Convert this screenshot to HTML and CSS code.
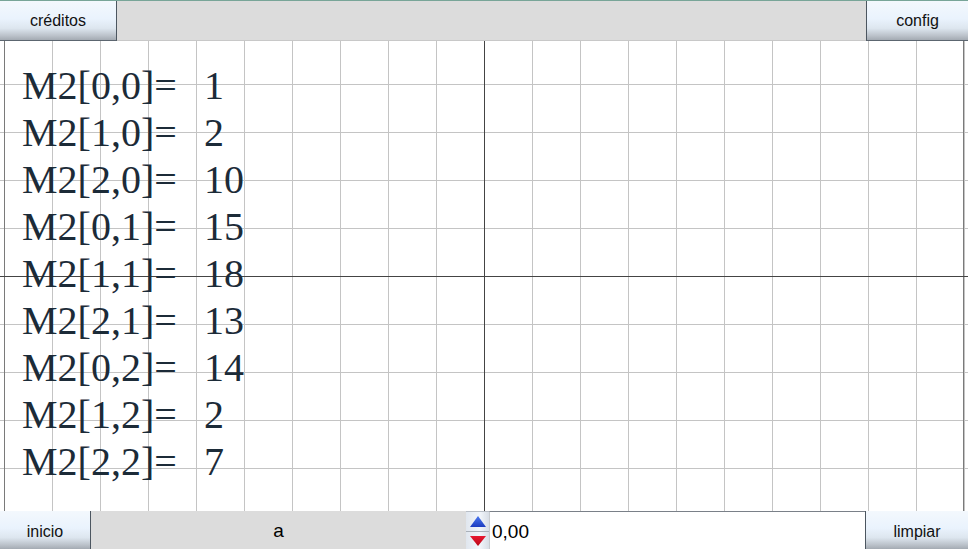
FILE: index.html
```html
<!DOCTYPE html>
<html lang="es">
<head>
<meta charset="utf-8">
<title>Matriz M2</title>
<link rel="stylesheet" href="styles.css">
</head>
<body>
<div class="app">
  <div class="topbar">
    <div class="btn btn-left">créditos</div>
    <div class="spacer"></div>
    <div class="btn btn-right">config</div>
  </div>
  <div class="canvas">
    <div class="rows">
      <div class="row"><span class="lbl">M2[0,0]=</span><span class="val">1</span></div>
      <div class="row"><span class="lbl">M2[1,0]=</span><span class="val">2</span></div>
      <div class="row"><span class="lbl">M2[2,0]=</span><span class="val">10</span></div>
      <div class="row"><span class="lbl">M2[0,1]=</span><span class="val">15</span></div>
      <div class="row"><span class="lbl">M2[1,1]=</span><span class="val">18</span></div>
      <div class="row"><span class="lbl">M2[2,1]=</span><span class="val">13</span></div>
      <div class="row"><span class="lbl">M2[0,2]=</span><span class="val">14</span></div>
      <div class="row"><span class="lbl">M2[1,2]=</span><span class="val">2</span></div>
      <div class="row"><span class="lbl">M2[2,2]=</span><span class="val">7</span></div>
    </div>
  </div>
  <div class="bottombar">
    <div class="btn btn-inicio">inicio</div>
    <div class="param">a</div>
    <div class="spinner">
      <svg class="arrow" width="16" height="12" viewBox="0 0 16 12"><defs><linearGradient id="gu" x1="0" y1="0" x2="0" y2="1"><stop offset="0" stop-color="#4a78f0"/><stop offset="1" stop-color="#1c3cc0"/></linearGradient></defs><polygon points="8,0 16,11 0,11" fill="url(#gu)"/></svg>
      <div class="spin-sep"></div>
      <svg class="arrow" width="16" height="12" viewBox="0 0 16 12"><defs><linearGradient id="gd" x1="0" y1="0" x2="0" y2="1"><stop offset="0" stop-color="#e81830"/><stop offset="1" stop-color="#b80818"/></linearGradient></defs><polygon points="0,1 16,1 8,11" fill="url(#gd)"/></svg>
    </div>
    <div class="input">0,00</div>
    <div class="btn btn-limpiar">limpiar</div>
  </div>
</div>
</body>
</html>
```
FILE: styles.css
```css
* { box-sizing: border-box; }
html, body { margin: 0; padding: 0; }
body {
  width: 968px;
  height: 549px;
  overflow: hidden;
  background: #ffffff;
  font-family: "Liberation Sans", Arial, sans-serif;
}
.app {
  display: flex;
  flex-direction: column;
  width: 968px;
  height: 549px;
}
.topbar {
  height: 41px;
  display: flex;
  background: #dcdcdc;
  border-top: 1px solid #78a598;
  border-bottom: 1px solid #c8c8c8;
}
.spacer { flex: 1; }
.btn {
  display: flex;
  align-items: center;
  justify-content: center;
  font-size: 16px;
  color: #111;
  background: linear-gradient(to bottom, #f3f8fd 0%, #eaf3fd 45%, #dde6ef 70%, #b9c0c8 90%, #a3aab2 100%);
}
.btn-left {
  width: 117px;
  margin-bottom: -1px;
  border-right: 1px solid #4c5660;
  border-bottom: 1px solid #5c6670;
}
.btn-right {
  width: 102px;
  margin-bottom: -1px;
  border-left: 1px solid #4c5660;
  border-bottom: 1px solid #5c6670;
}
.canvas {
  height: 470px;
  background-color: #ffffff;
  background-image:
    linear-gradient(#444, #444),
    linear-gradient(#444, #444),
    linear-gradient(#7a7a7a, #7a7a7a),
    linear-gradient(#7a7a7a, #7a7a7a),
    linear-gradient(to right, #c4c4c4 1px, transparent 1px),
    linear-gradient(to bottom, #c4c4c4 1px, transparent 1px);
  background-size:
    1px 100%,
    100% 1px,
    1px 100%,
    1px 100%,
    48px 48px,
    48px 48px;
  background-position:
    484px 0,
    0 235px,
    4px 0,
    963px 0,
    4px 0,
    0 43px;
  background-repeat:
    no-repeat,
    no-repeat,
    no-repeat,
    no-repeat,
    repeat,
    repeat;
}
.rows {
  padding: 21px 0 0 22px;
  font-family: "Liberation Serif", "Times New Roman", serif;
  font-size: 40px;
  line-height: 47px;
  color: #1c2b38;
}
.row { display: flex; white-space: nowrap; }
.lbl { width: 182px; }
.bottombar {
  height: 38px;
  display: flex;
  background: #dcdcdc;
}
.btn-inicio {
  width: 91px;
  border-right: 1px solid #4c5660;
  padding-top: 3px;
}
.param {
  flex: 0 0 375px;
  display: flex;
  align-items: center;
  justify-content: center;
  font-size: 19px;
  color: #000;
  padding-top: 2px;
}
.spinner {
  width: 23px;
  display: flex;
  flex-direction: column;
  align-items: center;
  padding-top: 4px;
  background: linear-gradient(to right, #e0e6ee, #f2f6fb 60%, #d8dee6);
  border-top: 1px solid #b8bec6;
}
.arrow { display: block; }
.spin-sep {
  width: 100%;
  height: 1px;
  margin: 3px 0 3px;
  background: #aab0b8;
}
.input {
  width: 376px;
  background: #ffffff;
  border-top: 1px solid #7a8088;
  border-left: 1px solid #c8ccd0;
  display: flex;
  align-items: center;
  padding-left: 2px;
  padding-top: 2px;
  font-size: 19px;
  color: #000;
}
.btn-limpiar {
  flex: 1;
  border-left: 1px solid #4c5660;
  padding-top: 3px;
}
```
